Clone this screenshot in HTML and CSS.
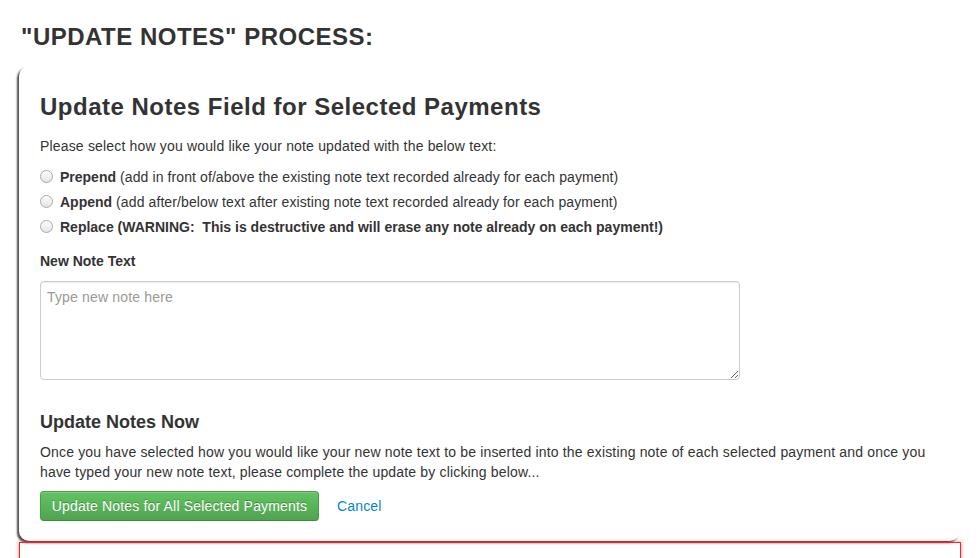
FILE: index.html
```html
<!DOCTYPE html>
<html>
<head>
<meta charset="utf-8">
<link rel="stylesheet" href="styles.css">
</head>
<body>
<div class="page">
  <h1 class="page-title">"UPDATE NOTES" PROCESS:</h1>
  <div class="card">
    <h2 class="card-title">Update Notes Field for Selected Payments</h2>
    <p class="intro">Please select how you would like your note updated with the below text:</p>
    <div class="options">
      <label class="option"><span class="radio"></span><span><b>Prepend</b> (add in front of/above the existing note text recorded already for each payment)</span></label>
      <label class="option"><span class="radio"></span><span><b>Append</b> (add after/below text after existing note text recorded already for each payment)</span></label>
      <label class="option"><span class="radio"></span><span><b>Replace (WARNING:&nbsp; This is destructive and will erase any note already on each payment!)</b></span></label>
    </div>
    <div class="field-label">New Note Text</div>
    <textarea class="note" placeholder="Type new note here"></textarea>
    <h3 class="sub-title">Update Notes Now</h3>
    <p class="desc">Once you have selected how you would like your new note text to be inserted into the existing note of each selected payment and once you have typed your new note text, please complete the update by clicking below...</p>
    <div class="actions">
      <button class="btn-success">Update Notes for All Selected Payments</button>
      <a class="cancel" href="#">Cancel</a>
    </div>
  </div>
  <div class="next-box"></div>
</div>
</body>
</html>
```
FILE: styles.css
```css
* { box-sizing: border-box; }
html, body { margin: 0; padding: 0; background: #fff; }
body {
  font-family: "Liberation Sans", Arial, Helvetica, sans-serif;
  font-size: 14px;
  letter-spacing: 0.17px;
  color: #333;
  overflow: hidden;
}
.page {
  padding: 23px 20px 0 19px;
}
.page-title {
  margin: 0 0 0 2px;
  font-size: 24px;
  line-height: 28px;
  font-weight: bold;
  letter-spacing: 0.5px;
  color: #333;
}
.card {
  margin-top: 15px;
  width: 941px;
  background: #fff;
  border-radius: 10px;
  box-shadow: -2px 2px 2px rgba(0,0,0,0.7);
  padding: 24px 21px 20px 21px;
}
.card-title {
  margin: 0;
  font-size: 24px;
  line-height: 34px;
  font-weight: bold;
  letter-spacing: 0.5px;
  color: #333;
}
.intro {
  margin: 12px 0 0 0;
  line-height: 20px;
}
.options {
  margin-top: 8px;
  display: flex;
  flex-direction: column;
}
.option {
  display: flex;
  align-items: center;
  height: 25px;
  line-height: 20px;
  letter-spacing: 0.1px;
}
.option b { font-weight: bold; letter-spacing: 0; }
.radio {
  width: 13px;
  height: 13px;
  border-radius: 50%;
  border: 1px solid #a9a9a9;
  background: linear-gradient(#fdfdfd, #e4e4e4);
  box-shadow: inset 0 1px 1px rgba(255,255,255,0.8);
  margin: 0 7px 0 0;
  flex: none;
}
.field-label {
  margin-top: 12px;
  font-weight: bold;
  line-height: 20px;
  letter-spacing: 0;
}
.note {
  display: block;
  margin-top: 10px;
  width: 700px;
  height: 99px;
  border: 1px solid #ccc;
  border-radius: 4px;
  padding: 5px 6px;
  font-family: "Liberation Sans", Arial, sans-serif;
  font-size: 14px;
  line-height: 20px;
  letter-spacing: 0.17px;
  color: #555;
  box-shadow: inset 0 1px 1px rgba(0,0,0,0.075);
  resize: vertical;
}
.note::placeholder { color: #999; }
.sub-title {
  margin: 30px 0 0 0;
  font-size: 18px;
  line-height: 24px;
  font-weight: bold;
  letter-spacing: 0;
  color: #333;
}
.desc {
  margin: 8px 0 0 0;
  line-height: 20px;
}
.actions {
  margin-top: 9px;
  display: flex;
  align-items: center;
}
.btn-success {
  height: 30px;
  width: 279px;
  padding: 0;
  white-space: nowrap;
  text-align: center;
  font-family: "Liberation Sans", Arial, sans-serif;
  font-size: 14px;
  letter-spacing: 0.17px;
  color: #fff;
  text-shadow: 0 -1px 0 rgba(0,0,0,0.25);
  background: linear-gradient(#62c462, #51a351);
  border: 1px solid #4a9a4a;
  border-bottom-color: #3f8a3f;
  border-radius: 4px;
  box-shadow: inset 0 1px 0 rgba(255,255,255,0.2), 0 1px 2px rgba(0,0,0,0.05);
}
.cancel {
  margin-left: 18px;
  color: #0088cc;
  text-decoration: none;
  font-size: 14px;
}
.next-box {
  margin-top: 1px;
  width: 942px;
  height: 40px;
  border: 1px solid #f22;
  box-shadow: 0 0 4px rgba(255,0,0,0.45);
}
```
